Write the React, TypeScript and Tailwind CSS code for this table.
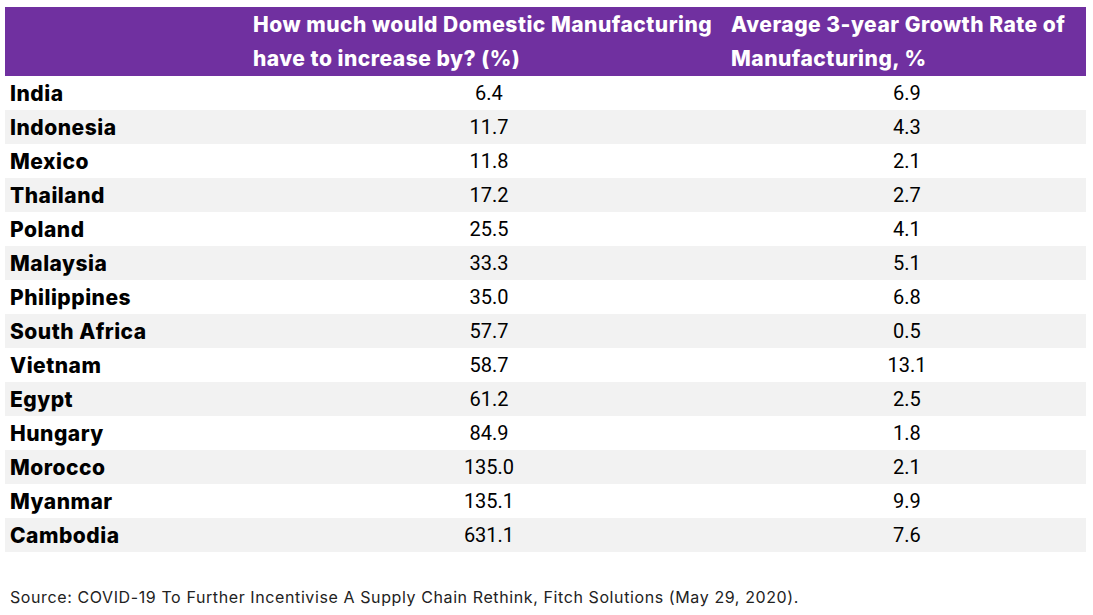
import React from "react";

const rows: [string, string, string][] = [
  ["India", "6.4", "6.9"],
  ["Indonesia", "11.7", "4.3"],
  ["Mexico", "11.8", "2.1"],
  ["Thailand", "17.2", "2.7"],
  ["Poland", "25.5", "4.1"],
  ["Malaysia", "33.3", "5.1"],
  ["Philippines", "35.0", "6.8"],
  ["South Africa", "57.7", "0.5"],
  ["Vietnam", "58.7", "13.1"],
  ["Egypt", "61.2", "2.5"],
  ["Hungary", "84.9", "1.8"],
  ["Morocco", "135.0", "2.1"],
  ["Myanmar", "135.1", "9.9"],
  ["Cambodia", "631.1", "7.6"],
];

export default function App() {
  return (
    <div className="w-[1093px] h-[615px] bg-white pt-[7px] pl-[5px]">
      <div className="w-[1081px]">
        <div className="flex h-[69px] bg-[#7030a0] text-white font-['Inter',sans-serif] font-extrabold text-[21px] tracking-[0.5px] leading-[34px] whitespace-nowrap">
          <div className="w-[245px]" />
          <div className="w-[478px] pl-[3px] pt-[1px]">
            How much would Domestic Manufacturing
            <br />
            have to increase by? (%)
          </div>
          <div className="flex-1 pl-[3px] pt-[1px]">
            Average 3-year Growth Rate of
            <br />
            Manufacturing, %
          </div>
        </div>
        {rows.map(([c, a, b], i) => (
          <div
            key={c}
            className={`flex h-[34px] items-center ${i % 2 === 1 ? "bg-[#f2f2f2]" : "bg-white"}`}
          >
            <div className="w-[245px] pl-[5px] pt-[2px] font-['Inter',sans-serif] font-extrabold text-[21px] tracking-[0.5px] text-black">
              {c}
            </div>
            <div className="w-[478px] text-center font-['Roboto',sans-serif] text-[20px] text-black">
              {a}
            </div>
            <div className="flex-1 text-center font-['Roboto',sans-serif] text-[20px] text-black">
              {b}
            </div>
          </div>
        ))}
      </div>
      <div className="mt-[33px] pl-[5px] font-['Inter',sans-serif] text-[16px] tracking-[0.6px] text-[#222]">
        Source: COVID-19 To Further Incentivise A Supply Chain Rethink, Fitch Solutions (May 29, 2020).
      </div>
    </div>
  );
}
